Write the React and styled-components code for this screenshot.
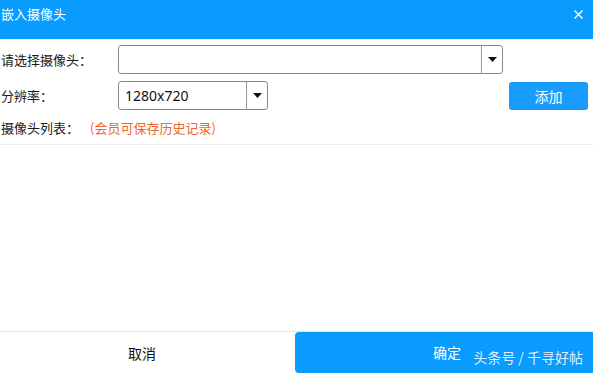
import React from "react";
import styled, { createGlobalStyle } from "styled-components";

const Global = createGlobalStyle`
  html, body { margin: 0; padding: 0; background: #fff; }
  body { font-family: "Noto Sans CJK SC", "Noto Sans", sans-serif; color: #1a1a1a; }
`;

const Dialog = styled.div`
  position: relative;
  width: 593px;
  height: 373px;
  display: flex;
  flex-direction: column;
  background: #fff;
  overflow: hidden;
`;

const TitleBar = styled.div`
  height: 39px;
  flex: none;
  background: #0a9bfe;
  display: flex;
  align-items: flex-start;
  justify-content: space-between;
  padding: 5px 10px 0 1px;
  box-sizing: border-box;
  color: #fff;
`;

const Title = styled.span`
  font-size: 13px;
  line-height: 18px;
`;

const Close = styled.svg`
  margin-top: 5px;
  width: 9px;
  height: 9px;
`;

const Form = styled.div`
  padding-top: 6px;
  display: flex;
  flex-direction: column;
`;

const Row = styled.div`
  display: flex;
  align-items: center;
  height: ${(p) => p.$h}px;
  margin-top: ${(p) => p.$mt || 0}px;
`;

const Label = styled.span`
  width: ${(p) => p.$w || 118}px;
  flex: none;
  font-size: 13px;
  line-height: 18px;
  padding-left: 1px;
  box-sizing: border-box;
`;

const Hint = styled.span`
  font-size: 13px;
  line-height: 18px;
  color: #f0662b;
`;

const Select = styled.div`
  width: ${(p) => p.$w}px;
  height: 29px;
  box-sizing: border-box;
  border: 1px solid #8a8a8a;
  border-radius: 3px;
  display: flex;
  align-items: stretch;
`;

const Value = styled.div`
  flex: 1;
  padding-left: 6px;
  display: flex;
  align-items: center;
  font-family: "Noto Sans", sans-serif;
  font-size: 14px;
  color: #111;
`;

const Arrow = styled.div`
  width: 20px;
  border-left: 1px solid #9a9a9a;
  display: flex;
  align-items: center;
  justify-content: center;
`;

const AddButton = styled.button`
  margin-left: auto;
  margin-right: 5px;
  width: 79px;
  height: 28px;
  border: none;
  border-radius: 3px;
  background: #1a9cff;
  color: #fff;
  font-family: inherit;
  font-size: 14px;
  padding: 0;
  align-self: flex-end;
`;

const List = styled.div`
  flex: 1;
  margin-top: 7px;
  border-top: 1px solid #ececec;
`;

const Footer = styled.div`
  height: 42px;
  flex: none;
  display: flex;
  border-top: 1px solid #e6e6e6;
  box-sizing: border-box;
`;

const Cancel = styled.div`
  width: 295px;
  box-sizing: border-box;
  display: flex;
  align-items: center;
  justify-content: center;
  font-size: 14px;
  color: #111;
  padding-right: 11px;
  padding-top: 1px;
`;

const Confirm = styled.div`
  flex: 1;
  background: #0a9bfe;
  border-radius: 4px 0 0 4px;
  display: flex;
  align-items: center;
  justify-content: center;
  font-size: 14px;
  color: #fff;
`;

const ConfirmText = styled.span`
  margin-left: 6px;
  margin-top: -2px;
`;

const Watermark = styled.span`
  position: absolute;
  right: 10px;
  bottom: 6px;
  font-size: 14px;
  line-height: 20px;
  color: rgba(255, 255, 255, 0.88);
`;

const Caret = () => (
  <svg width="9" height="5" viewBox="0 0 9 5">
    <path d="M0 0H9L4.5 5Z" fill="#111" />
  </svg>
);

export default function App() {
  return (
    <>
      <Global />
      <Dialog>
        <TitleBar>
          <Title>嵌入摄像头</Title>
          <Close viewBox="0 0 9 9">
            <path d="M0.5 0.5L8.5 8.5M8.5 0.5L0.5 8.5" stroke="#fff" strokeWidth="1.4" />
          </Close>
        </TitleBar>
        <Form>
          <Row $h={29}>
            <Label>请选择摄像头：</Label>
            <Select $w={385}>
              <Value />
              <Arrow><Caret /></Arrow>
            </Select>
          </Row>
          <Row $h={29} $mt={7}>
            <Label>分辨率：</Label>
            <Select $w={150}>
              <Value>1280x720</Value>
              <Arrow><Caret /></Arrow>
            </Select>
            <AddButton>添加</AddButton>
          </Row>
          <Row $h={18} $mt={9}>
            <Label $w={90}>摄像头列表：</Label>
            <Hint>(会员可保存历史记录)</Hint>
          </Row>
        </Form>
        <List />
        <Footer>
          <Cancel>取消</Cancel>
          <Confirm><ConfirmText>确定</ConfirmText></Confirm>
        </Footer>
        <Watermark>头条号 / 千寻好帖</Watermark>
      </Dialog>
    </>
  );
}
